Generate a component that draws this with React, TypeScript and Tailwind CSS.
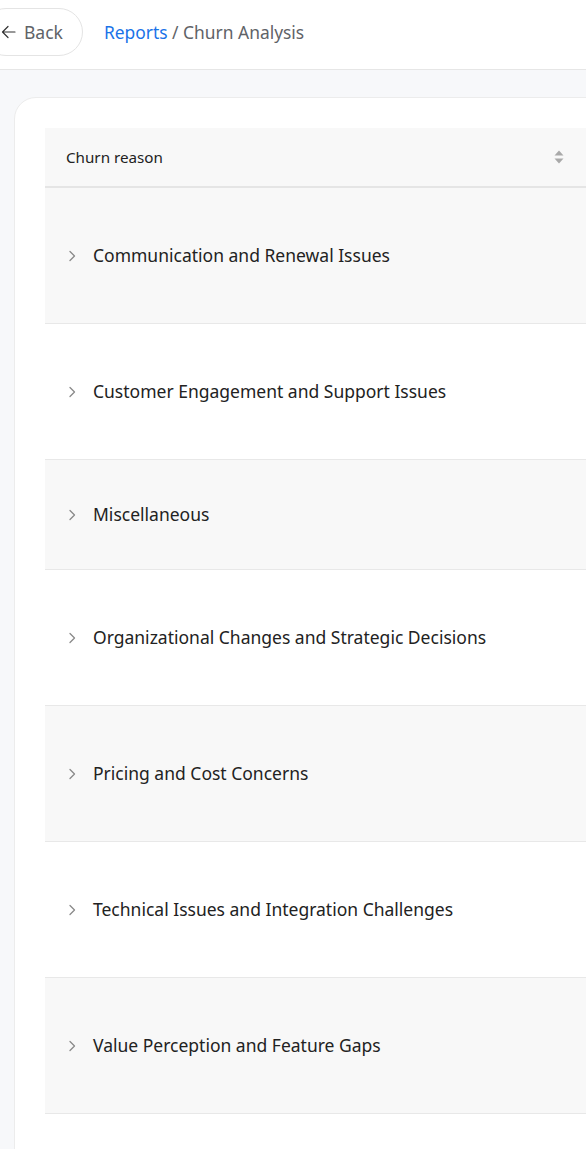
import React from "react";

const rows: { label: string; h: string; gray: boolean }[] = [
  { label: "Communication and Renewal Issues", h: "h-[136px]", gray: true },
  { label: "Customer Engagement and Support Issues", h: "h-[136px]", gray: false },
  { label: "Miscellaneous", h: "h-[110px]", gray: true },
  { label: "Organizational Changes and Strategic Decisions", h: "h-[136px]", gray: false },
  { label: "Pricing and Cost Concerns", h: "h-[136px]", gray: true },
  { label: "Technical Issues and Integration Challenges", h: "h-[136px]", gray: false },
  { label: "Value Perception and Feature Gaps", h: "h-[136px]", gray: true },
];

function Chevron() {
  return (
    <svg width="10" height="14" viewBox="0 0 10 14" fill="none" className="shrink-0">
      <path d="M3 2.5 L7.5 7 L3 11.5" stroke="#8a8a8a" strokeWidth="1.3" strokeLinecap="round" strokeLinejoin="round" />
    </svg>
  );
}

export default function App() {
  return (
    <div className="w-[586px] h-[1149px] overflow-hidden bg-white" style={{ fontFamily: '"Noto Sans", "Open Sans", sans-serif' }}>
      <div className="h-[70px] flex items-start pt-[8px] border-b border-[#e6e6e6] bg-white">
        <button className="ml-[-18px] h-[48px] pl-[18px] pr-[19px] rounded-full border border-[#e4e4e4] flex items-center gap-[8px] text-[#5f6368] text-[17.5px] bg-white">
          <svg width="15" height="14" viewBox="0 0 15 14" fill="none">
            <path d="M14 7 H1.5 M7 1.5 L1.5 7 L7 12.5" stroke="#333" strokeWidth="1.2" strokeLinecap="round" strokeLinejoin="round" />
          </svg>
          <span>Back</span>
        </button>
        <div className="ml-[21px] h-[48px] flex items-center text-[17.4px] text-[#5f6368]">
          <span>
            <span className="text-[#1a73e8]">Reports</span> / Churn Analysis
          </span>
        </div>
      </div>
      <div className="bg-[#f7f8fa] pl-[14px] pt-[27px] h-full">
        <div className="w-[640px] bg-white border border-[#ececec] rounded-[22px] pl-[30px] pt-[30px] pb-[120px]">
          <div className="h-[60px] bg-[#f8f8f8] border-b-2 border-[#e5e5e5] flex items-center pl-[21px] pr-[89px]">
            <span className="text-[15.2px] text-[#222]">Churn reason</span>
            <svg width="10" height="16" viewBox="0 0 10 16" className="ml-auto">
              <path d="M5 1.5 L9.5 6.5 H0.5 Z" fill="#a9a9a9" />
              <path d="M5 14.5 L9.5 9.5 H0.5 Z" fill="#a9a9a9" />
            </svg>
          </div>
          {rows.map((r) => (
            <div
              key={r.label}
              className={`${r.h} ${r.gray ? "bg-[#f8f8f8]" : "bg-white"} border-b border-[#e8e8e8] flex items-center pl-[22px] gap-[16px]`}
            >
              <Chevron />
              <span className="text-[17.5px] text-[#222] whitespace-nowrap">{r.label}</span>
            </div>
          ))}
        </div>
      </div>
    </div>
  );
}
